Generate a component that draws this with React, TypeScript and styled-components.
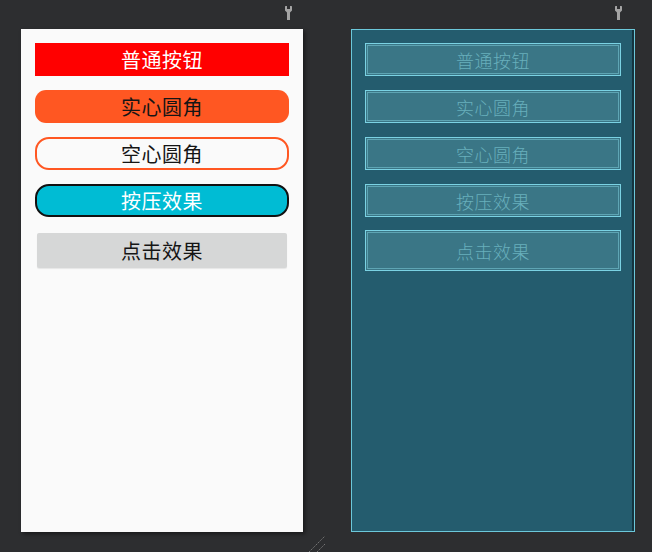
import React from "react";
import styled, { createGlobalStyle, css } from "styled-components";

const Global = createGlobalStyle`
  html, body { margin: 0; padding: 0; background: #2d2e30; }
  body { width: 652px; height: 552px; overflow: hidden; font-family: "Noto Sans CJK SC", "Noto Sans", sans-serif; }
`;

const Canvas = styled.div`
  display: flex;
  flex-direction: row;
  gap: 48px;
  padding-left: 21px;
  width: 652px;
  height: 552px;
  box-sizing: border-box;
  background: #2d2e30;
`;

const Column = styled.div<{ $w: number }>`
  position: relative;
  display: flex;
  flex-direction: column;
  width: ${(p) => p.$w}px;
`;

const Header = styled.div<{ $pr: number }>`
  height: 29px;
  display: flex;
  justify-content: flex-end;
  align-items: flex-start;
  padding-top: 6px;
  padding-right: ${(p) => p.$pr}px;
  box-sizing: border-box;
`;

const DesignPanel = styled.div`
  height: 503px;
  background: #fafafa;
  box-shadow: 2px 2px 4px rgba(0, 0, 0, 0.45);
  padding: 14px 14px 0 14px;
  box-sizing: border-box;
  display: flex;
  flex-direction: column;
  gap: 14px;
`;

const BlueprintPanel = styled.div`
  height: 503px;
  background: #245c6e;
  border: 1px solid #6cc8da;
  box-shadow: inset -2px 0 0 #14343f;
  padding: 13px 13px 0 13px;
  box-sizing: border-box;
  display: flex;
  flex-direction: column;
  gap: 14px;
`;

type Variant = "plain" | "solid" | "outline" | "press" | "click";

const btnBase = css`
  height: 33px;
  display: flex;
  align-items: center;
  justify-content: center;
  font-size: 20px;
  box-sizing: border-box;
  letter-spacing: 0.5px;
`;

const DesignButton = styled.div<{ $v: Variant }>`
  ${btnBase}
  ${(p) =>
    p.$v === "plain" &&
    css`
      background: #ff0000;
      color: #ffffff;
    `}
  ${(p) =>
    p.$v === "solid" &&
    css`
      background: #ff5722;
      color: #151515;
      border-radius: 11px;
    `}
  ${(p) =>
    p.$v === "outline" &&
    css`
      background: #fafafa;
      color: #151515;
      border: 2px solid #ff5722;
      border-radius: 14px;
    `}
  ${(p) =>
    p.$v === "press" &&
    css`
      background: #00bcd4;
      color: #ffffff;
      border: 2px solid #111111;
      border-radius: 14px;
    `}
`;

const ClickWrap = styled.div`
  margin-top: -1px;
  height: 41px;
  padding: 3px 2px;
  box-sizing: border-box;
  display: flex;
`;

const ClickButton = styled.div`
  ${btnBase}
  flex: 1;
  height: 35px;
  background: #d6d7d7;
  border-radius: 2px;
  color: #151515;
  box-shadow: 0 1px 1px rgba(0, 0, 0, 0.08);
`;

const BlueprintButton = styled.div<{ $h: number; $mt: number }>`
  height: ${(p) => p.$h}px;
  margin-top: ${(p) => p.$mt}px;
  border: 1px solid #7ad2e3;
  background: #3a7686;
  padding: 1px;
  box-sizing: border-box;
  display: flex;
`;

const BlueprintInner = styled.div`
  flex: 1;
  border: 1px solid #5ea5b4;
  display: flex;
  align-items: center;
  justify-content: center;
  color: #68afbc;
  font-size: 18px;
  font-weight: 300;
  letter-spacing: 0.5px;
`;

const Handle = styled.svg`
  position: absolute;
  left: 287px;
  top: 535px;
`;

const Wrench = () => (
  <svg width="7" height="14" viewBox="0 0 7 14">
    <path
      d="M0.5 0 H2 V3 H5 V0 H6.5 Q7 0 7 1 V4.5 L5 6.5 V14 H2 V6.5 L0 4.5 V1 Q0 0 0.5 0 Z"
      fill="#a4a4a4"
    />
  </svg>
);

const labels = ["普通按钮", "实心圆角", "空心圆角", "按压效果", "点击效果"];
const variants: Variant[] = ["plain", "solid", "outline", "press"];

export default function App() {
  return (
    <>
      <Global />
      <Canvas>
        <Column $w={282}>
          <Header $pr={11}>
            <Wrench />
          </Header>
          <DesignPanel>
            {variants.map((v, i) => (
              <DesignButton key={v} $v={v}>
                {labels[i]}
              </DesignButton>
            ))}
            <ClickWrap>
              <ClickButton>{labels[4]}</ClickButton>
            </ClickWrap>
          </DesignPanel>
          <Handle width="18" height="18" viewBox="0 0 18 18">
            <line x1="1" y1="17" x2="17" y2="1" stroke="#7a7a7a" strokeWidth="1" strokeDasharray="1.5 1" />
            <line x1="9" y1="17" x2="17" y2="9" stroke="#7a7a7a" strokeWidth="1" strokeDasharray="1.5 1" />
          </Handle>
        </Column>
        <Column $w={284}>
          <Header $pr={13}>
            <Wrench />
          </Header>
          <BlueprintPanel>
            {labels.map((l, i) => (
              <BlueprintButton key={l} $h={i === 4 ? 41 : 33} $mt={i === 4 ? -1 : 0}>
                <BlueprintInner>{l}</BlueprintInner>
              </BlueprintButton>
            ))}
          </BlueprintPanel>
        </Column>
      </Canvas>
    </>
  );
}
